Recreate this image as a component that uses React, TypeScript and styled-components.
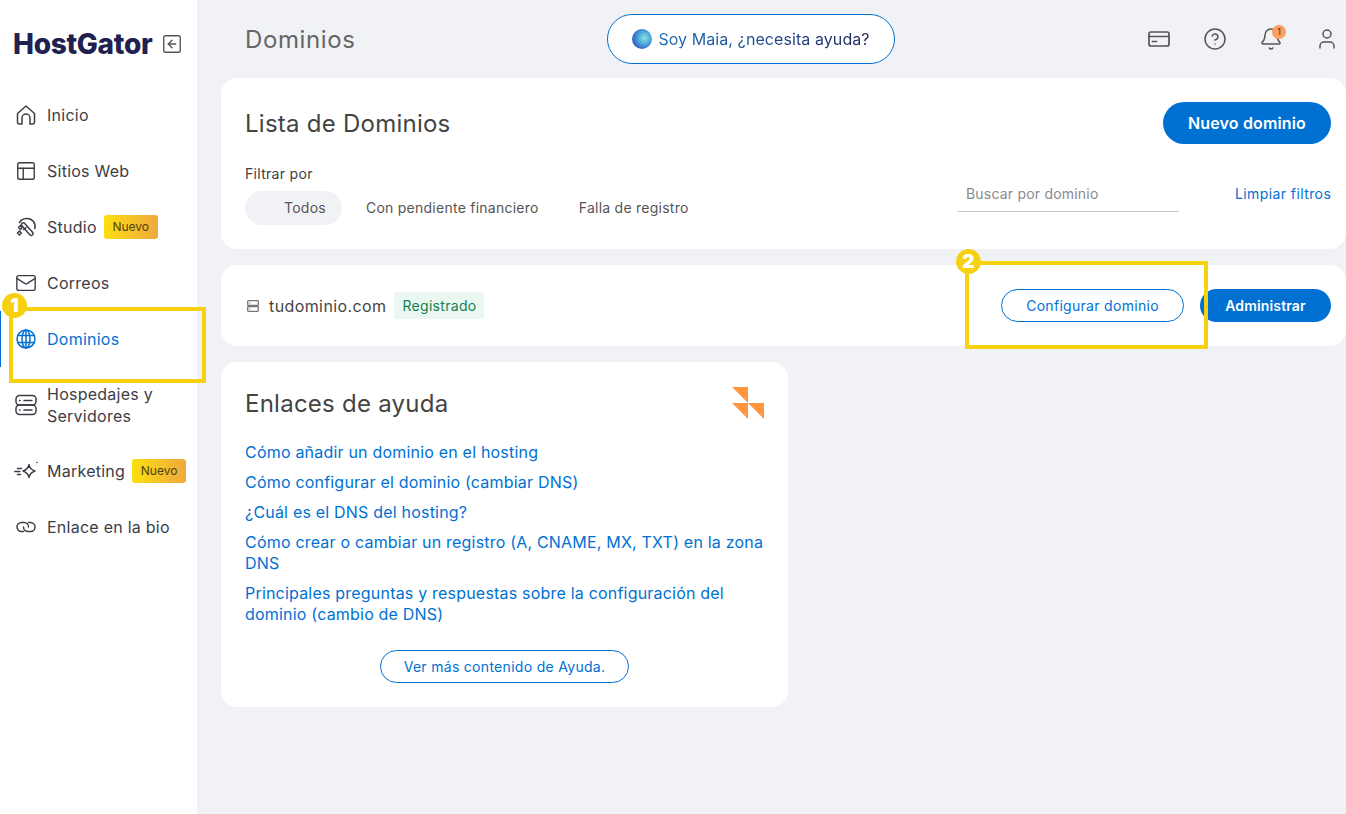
import React from "react";
import styled, { createGlobalStyle } from "styled-components";
import { Bell, CircleHelp, Mail, PanelsTopLeft, SquareArrowLeft, User } from "lucide-react";

const FONT = `"Inter", "Noto Sans", sans-serif`;

const GlobalStyle = createGlobalStyle`
  html, body { margin: 0; padding: 0; height: 100%; }
  body { font-family: ${FONT}; background: #f1f2f6; color: #3d3d46; overflow: hidden; }
  * { box-sizing: border-box; }
`;

const Page = styled.div`
  position: relative;
  display: flex;
  width: 1346px;
  height: 814px;
  overflow: hidden;
`;

const Sidebar = styled.aside`
  flex: 0 0 197px;
  background: #fff;
`;

const LogoRow = styled.div`
  display: flex;
  align-items: center;
  height: 87px;
  padding-left: 13px;
  gap: 8px;
  color: #555;
`;

const Logo = styled.span`
  font-size: 28px;
  font-weight: 800;
  letter-spacing: -0.3px;
  color: #1f2250;
  width: 140px;
`;

const NavItem = styled.div<{ $active?: boolean }>`
  display: flex;
  align-items: center;
  gap: 10px;
  min-height: 56px;
  padding: 16px 0 16px 15px;
  font-size: 16px;
  line-height: 22px;
  letter-spacing: 0.25px;
  color: ${(p) => (p.$active ? "#0071d2" : "#3d3d46")};
  ${(p) => p.$active && "box-shadow: inset 1px 0 0 #0071d2;"}
  svg { flex: none; }
`;

const NewBadge = styled.span`
  width: 54px;
  font-size: 12px;
  line-height: 24px;
  letter-spacing: 0;
  text-align: center;
  margin-left: -3px;
  border-radius: 3px;
  color: #4d4210;
  background: linear-gradient(90deg, #fbdf0f, #f0a83e);
`;

const Main = styled.main`
  flex: 1;
  min-width: 0;
  padding-left: 24px;
`;

const TopBar = styled.header`
  display: grid;
  grid-template-columns: 362px 288px 1fr;
  align-items: center;
  height: 78px;
  padding-left: 24px;
`;

const PageTitle = styled.h1`
  margin: 0;
  font-size: 24px;
  font-weight: 400;
  letter-spacing: 0.6px;
  color: #666;
`;

const MaiaButton = styled.div`
  display: flex;
  align-items: center;
  justify-content: center;
  gap: 6px;
  height: 50px;
  border: 1px solid #0071d2;
  border-radius: 25px;
  background: #fff;
  font-size: 16px;
  letter-spacing: 0.08px;
`;

const MaiaText = styled.span`
  background: linear-gradient(90deg, #1b6cb8, #20295f);
  -webkit-background-clip: text;
  background-clip: text;
  color: transparent;
`;

const MaiaOrb = styled.span`
  width: 20px;
  height: 20px;
  border-radius: 50%;
  background: radial-gradient(circle at 62% 45%, #8be4dc 0, #4aa5d8 40%, #2f4fc0 80%, #b9c6ee 100%);
`;

const TopIcons = styled.div`
  display: flex;
  align-items: center;
  justify-content: flex-end;
  gap: 32px;
  padding-right: 7px;
  color: #555;
`;

const BellWrap = styled.span`
  position: relative;
  display: flex;
`;

const Count = styled.span`
  position: absolute;
  top: -2px;
  right: -3px;
  width: 14px;
  height: 14px;
  border-radius: 50%;
  background: #ff9e5e;
  font-size: 9px;
  line-height: 14px;
  text-align: center;
  color: #333;
`;

const Stack = styled.div`
  display: flex;
  flex-direction: column;
  gap: 16px;
`;

const Card = styled.section`
  background: #fff;
  border-radius: 16px;
`;

const FilterCard = styled(Card)`
  height: 171px;
  padding: 24px 15px 0 24px;
`;

const CardHead = styled.div<{ $tight?: boolean }>`
  display: flex;
  align-items: center;
  justify-content: space-between;
  height: ${(p) => (p.$tight ? 34 : 42)}px;
`;

const CardTitle = styled.h2`
  margin: 0;
  padding-top: 1px;
  font-size: 24px;
  font-weight: 400;
  letter-spacing: 0.25px;
  color: #444;
`;

const PrimaryButton = styled.button<{ $small?: boolean }>`
  width: ${(p) => (p.$small ? 131 : 168)}px;
  height: ${(p) => (p.$small ? 33 : 42)}px;
  padding: 0;
  border: 0;
  border-radius: 21px;
  background: #0071d2;
  color: #fff;
  font: 600 ${(p) => (p.$small ? 14 : 16)}px ${FONT};
  letter-spacing: 0.15px;
`;

const FilterRow = styled.div`
  display: flex;
  justify-content: space-between;
  align-items: flex-end;
  margin-top: 21px;
`;

const FilterLabel = styled.div`
  font-size: 14px;
  line-height: 18px;
  letter-spacing: 0.3px;
  margin-bottom: 8px;
`;

const Chips = styled.div`
  display: flex;
  align-items: center;
  gap: 8px;
`;

const Chip = styled.span<{ $active?: boolean }>`
  font-size: 14px;
  line-height: 34px;
  letter-spacing: 0.25px;
  color: #555;
  padding: 0 16px;
  ${(p) => p.$active && "background:#f1f2f6; border-radius:17px; padding-left:39px;"}
`;

const SearchGroup = styled.div`
  display: flex;
  align-items: flex-end;
  gap: 56px;
  padding-bottom: 13px;
`;

const SearchField = styled.div`
  width: 221px;
  height: 35px;
  padding: 8px 8px 0;
  border-bottom: 1px solid #c8c8c8;
  font-size: 14px;
  letter-spacing: 0.2px;
  color: #8b8b8b;
`;

const TextLink = styled.a`
  width: 96px;
  white-space: nowrap;
  font-size: 14px;
  line-height: 20px;
  letter-spacing: 0.4px;
  padding-bottom: 8px;
  color: #0071d2;
`;

const DomainCard = styled(Card)`
  display: flex;
  align-items: center;
  height: 81px;
  padding: 0 15px 0 26px;
  color: #777;
`;

const DomainName = styled.span`
  margin: 0 8px 0 10px;
  font-size: 16px;
  letter-spacing: 0.4px;
  color: #444;
`;

const Status = styled.span`
  width: 90px;
  text-align: center;
  font-size: 14px;
  line-height: 27px;
  letter-spacing: 0.3px;
  border-radius: 3px;
  color: #14804f;
  background: #ebf8f2;
`;

const DomainActions = styled.div`
  display: flex;
  gap: 16px;
  margin-left: auto;
`;

const OutlineButton = styled.button<{ $w: number }>`
  width: ${(p) => p.$w}px;
  height: 33px;
  padding: 0;
  border: 1px solid #0071d2;
  border-radius: 17px;
  background: #fff;
  color: #0071d2;
  font: 400 14px ${FONT};
  letter-spacing: 0.3px;
`;

const HelpCard = styled(Card)`
  width: 567px;
  height: 345px;
  padding: 24px;
`;

const HelpLinks = styled.ul`
  list-style: none;
  margin: 22px 0 0;
  padding: 0;
  display: flex;
  flex-direction: column;
  gap: 9px;
  font-size: 16px;
  line-height: 21px;
  letter-spacing: 0.2px;
  color: #0071d2;
`;

const MoreRow = styled.div`
  display: flex;
  justify-content: center;
  margin-top: 25px;
`;

const Annotation = styled.div<{ $x: number; $y: number; $w: number; $h: number }>`
  position: absolute;
  left: ${(p) => p.$x}px;
  top: ${(p) => p.$y}px;
  width: ${(p) => p.$w}px;
  height: ${(p) => p.$h}px;
  border: 4px solid #f5d110;
  pointer-events: none;
`;

const Marker = styled.span<{ $left: number; $top: number }>`
  position: absolute;
  left: ${(p) => p.$left}px;
  top: ${(p) => p.$top}px;
  width: 25px;
  height: 25px;
  border-radius: 50%;
  background: #f5d110;
  color: #fff;
  font-weight: 900;
  font-size: 19px;
  line-height: 25px;
  text-align: center;
`;

const HouseIcon = () => (
  <svg width="22" height="22" viewBox="0 0 22 22" fill="none" stroke="currentColor" strokeWidth="1.5" strokeLinejoin="round">
    <path d="M2.500 9.500 11 2l8.500 7.500V18a2 2 0 0 1-2 2h-2.500v-6a4 4 0 0 0-8 0v6H4.500a2 2 0 0 1-2-2z" />
  </svg>
);

const WandIcon = () => (
  <svg width="22" height="22" viewBox="0 0 22 22" fill="none" stroke="currentColor" strokeWidth="1.5" strokeLinejoin="round" strokeLinecap="round">
    <path d="M4.500 6.500C7.500 1.500 15 1 18.500 5.500c1.600 2.200 2 4.500 1.300 7" />
    <path d="M9.500 7.300 17.800 16.500a1.900 1.900 0 0 1-2.800 2.500L6.900 9.800a1.800 1.800 0 0 1 2.600-2.500z" />
    <path d="M11 11.500 8.700 13.700" />
    <path d="M5.500 9.500 7 11.500 5.500 13.500 3.500 11.500z" />
    <path d="M4.500 15 6.300 17 4.500 19 2.500 17z" />
  </svg>
);

const GlobeIcon = () => (
  <svg width="22" height="22" viewBox="0 0 22 22" fill="none" stroke="currentColor" strokeWidth="1.500">
    <circle cx="11" cy="11" r="9" />
    <ellipse cx="11" cy="11" rx="4" ry="9" />
    <path d="M11 2v18M2.800 7.500h16.400M2.800 14.500h16.400" />
  </svg>
);

const ServerIcon = () => (
  <svg width="22" height="22" viewBox="0 0 22 22" fill="none" stroke="currentColor" strokeWidth="1.500" strokeLinecap="round">
    <rect x="1" y="1.500" width="20" height="9.500" rx="3.500" />
    <rect x="1" y="11" width="20" height="9.500" rx="3.500" />
    <path d="M4.500 6.500h.5M9 6.500h8M4.500 16h.5M9 16h8" />
  </svg>
);

const SmallServerIcon = () => (
  <svg width="12" height="12" viewBox="0 0 12 12" fill="none" stroke="currentColor" strokeWidth="1.300">
    <rect x="0.700" y="0.700" width="10.600" height="4.800" rx="0.800" />
    <rect x="0.700" y="6.500" width="10.600" height="4.800" rx="0.800" />
    <path d="M2.500 3.100h1M2.500 8.900h1" />
  </svg>
);

const SparkIcon = () => (
  <svg width="24" height="22" viewBox="0 0 24 22" fill="none" stroke="currentColor" strokeWidth="1.500" strokeLinejoin="round" strokeLinecap="round" style={{ margin: "0 -1px 0 -1px" }}>
    <path d="M15 4.500c.5 3.200 2.300 5.300 6 6.500-3.700 1.200-5.500 3.300-6 6.500-.6-3.200-2.500-5.300-6-6.500 3.500-1.200 5.400-3.300 6-6.500z" />
    <path d="M22.800 2.500h.1M3.500 8.500h4M.8 11.500h5M3.500 14.500h3" />
  </svg>
);

const LinkIcon = () => (
  <svg width="22" height="22" viewBox="0 0 22 22" fill="none" stroke="currentColor" strokeWidth="1.500" strokeLinecap="round">
    <path d="M8.500 15.500H6.500a4.500 4.500 0 0 1 0-9H9c2.500 0 4.500 2 4.500 4.500" />
    <path d="M13.500 6.500h2a4.500 4.500 0 0 1 0 9H13c-2.500 0-4.500-2-4.500-4.500" />
  </svg>
);

const CardIcon = () => (
  <svg width="24" height="24" viewBox="0 0 24 24" fill="none" stroke="currentColor" strokeWidth="1.700" strokeLinecap="round">
    <rect x="2" y="5" width="20" height="14" rx="2" />
    <path d="M2 9.500h20M5.500 14.500h4" />
  </svg>
);

const BrandMark = () => (
  <svg width="32" height="32" viewBox="0 0 32 32" fill="#ff9640">
    <path d="M0 0h16v16z" />
    <path d="M0 16h16v16z" />
    <path d="M16 16h16v16z" />
  </svg>
);

const helpLinks = [
  "Cómo añadir un dominio en el hosting",
  "Cómo configurar el dominio (cambiar DNS)",
  "¿Cuál es el DNS del hosting?",
  "Cómo crear o cambiar un registro (A, CNAME, MX, TXT) en la zona DNS",
  "Principales preguntas y respuestas sobre la configuración del dominio (cambio de DNS)",
];

export default function App() {
  return (
    <Page>
      <GlobalStyle />
      <Sidebar>
        <LogoRow>
          <Logo>HostGator</Logo>
          <SquareArrowLeft size={22} strokeWidth={1.5} />
        </LogoRow>
        <NavItem><HouseIcon />Inicio</NavItem>
        <NavItem><PanelsTopLeft size={22} strokeWidth={1.5} />Sitios Web</NavItem>
        <NavItem><WandIcon />Studio <NewBadge>Nuevo</NewBadge></NavItem>
        <NavItem><Mail size={22} strokeWidth={1.5} />Correos</NavItem>
        <NavItem $active><GlobeIcon />Dominios</NavItem>
        <NavItem><ServerIcon /><span>Hospedajes y<br />Servidores</span></NavItem>
        <NavItem><SparkIcon />Marketing <NewBadge>Nuevo</NewBadge></NavItem>
        <NavItem><LinkIcon />Enlace en la bio</NavItem>
      </Sidebar>
      <Main>
        <TopBar>
          <PageTitle>Dominios</PageTitle>
          <MaiaButton><MaiaOrb /><MaiaText>Soy Maia, ¿necesita ayuda?</MaiaText></MaiaButton>
          <TopIcons>
            <CardIcon />
            <CircleHelp size={24} strokeWidth={1.5} />
            <BellWrap><Bell size={24} strokeWidth={1.5} /><Count>1</Count></BellWrap>
            <User size={24} strokeWidth={1.5} />
          </TopIcons>
        </TopBar>
        <Stack>
          <FilterCard>
            <CardHead>
              <CardTitle>Lista de Dominios</CardTitle>
              <PrimaryButton>Nuevo dominio</PrimaryButton>
            </CardHead>
            <FilterRow>
              <div>
                <FilterLabel>Filtrar por</FilterLabel>
                <Chips>
                  <Chip $active>Todos</Chip>
                  <Chip>Con pendiente financiero</Chip>
                  <Chip>Falla de registro</Chip>
                </Chips>
              </div>
              <SearchGroup>
                <SearchField>Buscar por dominio</SearchField>
                <TextLink>Limpiar filtros</TextLink>
              </SearchGroup>
            </FilterRow>
          </FilterCard>
          <DomainCard>
            <SmallServerIcon />
            <DomainName>tudominio.com</DomainName>
            <Status>Registrado</Status>
            <DomainActions>
              <OutlineButton $w={183}>Configurar dominio</OutlineButton>
              <PrimaryButton $small>Administrar</PrimaryButton>
            </DomainActions>
          </DomainCard>
          <HelpCard>
            <CardHead $tight>
              <CardTitle>Enlaces de ayuda</CardTitle>
              <BrandMark />
            </CardHead>
            <HelpLinks>
              {helpLinks.map((text) => <li key={text}>{text}</li>)}
            </HelpLinks>
            <MoreRow>
              <OutlineButton $w={249}>Ver más contenido de Ayuda.</OutlineButton>
            </MoreRow>
          </HelpCard>
        </Stack>
      </Main>
      <Annotation $x={9} $y={307} $w={197} $h={76}><Marker $left={-11} $top={-18}>1</Marker></Annotation>
      <Annotation $x={965} $y={261} $w={243} $h={88}><Marker $left={-13} $top={-16}>2</Marker></Annotation>
    </Page>
  );
}
